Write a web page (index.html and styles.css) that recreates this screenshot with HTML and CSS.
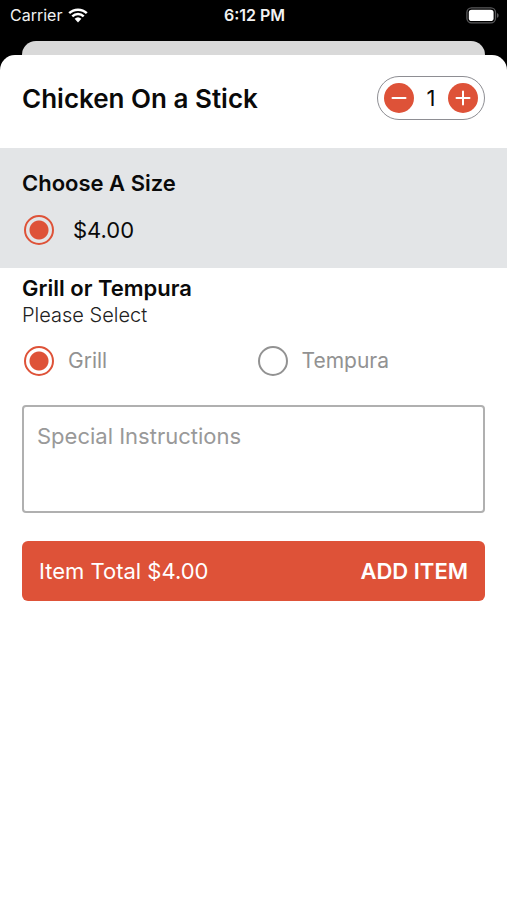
FILE: index.html
```html
<!DOCTYPE html>
<html lang="en">
<head>
<meta charset="utf-8">
<meta name="viewport" content="width=device-width, initial-scale=1">
<title>Chicken On a Stick</title>
<link rel="stylesheet" href="styles.css">
</head>
<body>
<div class="status">
  <div class="carrier">
    <span>Carrier</span>
    <svg class="wifi" viewBox="0 0 20 15" aria-hidden="true">
      <path d="M1.2 5.2a12.7 12.7 0 0 1 17.6 0M4.3 8.4a8.2 8.2 0 0 1 11.4 0" fill="none" stroke="currentColor" stroke-width="2.5"/>
      <path d="M6.6 10.8a5 5 0 0 1 6.8 0L10 14.4z" fill="currentColor"/>
    </svg>
  </div>
  <span class="time">6:12 PM</span>
  <svg class="battery" viewBox="0 0 33 17" aria-hidden="true">
    <rect x="0.9" y="0.9" width="28.6" height="15" rx="4.6" fill="none" stroke="#59595b" stroke-width="1.3"/>
    <rect x="2.8" y="2.8" width="24.8" height="11.2" rx="2.8" fill="#fff"/>
    <path d="M31 6v4.8c1-.4 1.6-1.3 1.6-2.4S32 6.400 31 6z" fill="#59595b"/>
  </svg>
</div>
<div class="back-card"></div>
<main class="sheet">
  <header class="header">
    <h1>Chicken On a Stick</h1>
    <div class="stepper">
      <button type="button" aria-label="Decrease quantity"><svg viewBox="0 0 30 30" aria-hidden="true"><path d="M8.500 15h13"/></svg></button>
      <output>1</output>
      <button type="button" aria-label="Increase quantity"><svg viewBox="0 0 30 30" aria-hidden="true"><path d="M8.500 15h13M15 8.500v13"/></svg></button>
    </div>
  </header>
  <section class="size">
    <h2>Choose A Size</h2>
    <label class="option price"><input type="radio" name="size" checked>$4.00</label>
  </section>
  <section class="style">
    <h2>Grill or Tempura</h2>
    <p>Please Select</p>
    <div class="choices">
      <label class="option"><input type="radio" name="style" checked>Grill</label>
      <label class="option"><input type="radio" name="style">Tempura</label>
    </div>
  </section>
  <div class="actions">
    <textarea placeholder="Special Instructions" aria-label="Special Instructions"></textarea>
    <button type="button" class="add"><span>Item Total $4.00</span><strong>ADD ITEM</strong></button>
  </div>
</main>
</body>
</html>
```
FILE: styles.css
```css
* {
  box-sizing: border-box;
}

body {
  margin: 0;
  min-height: 100vh;
  display: flex;
  flex-direction: column;
  background: #000;
  color: #0a0a0a;
  font-family: Inter, "Liberation Sans", sans-serif;
  font-size: 22px;
}

h1, h2, p {
  margin: 0;
}

button, textarea {
  font: inherit;
}

.status {
  display: grid;
  grid-template-columns: 1fr auto 1fr;
  align-items: center;
  height: 30px;
  padding: 0 8px 0 10px;
  color: #f2f2f2;
  font-size: 16px;
}

.carrier {
  display: flex;
  align-items: center;
  gap: 6px;
}

.wifi {
  width: 20px;
  height: 15px;
  color: #fff;
}

.time {
  font-weight: 600;
}

.battery {
  width: 33px;
  height: 17px;
  justify-self: end;
}

.back-card {
  height: 14px;
  margin: 11px 22px 0;
  border-radius: 14px 14px 0 0;
  background: #d9d9d9;
}

.sheet {
  flex: 1;
  border-radius: 15px 15px 0 0;
  background: #fff;
}

.header {
  display: flex;
  align-items: center;
  justify-content: space-between;
  padding: 21px 22px 28px;
}

h1 {
  font-size: 26px;
  font-weight: 600;
}

h2 {
  font-size: 22px;
  line-height: 28px;
  font-weight: 600;
}

.stepper {
  display: flex;
  align-items: center;
  justify-content: space-between;
  width: 108px;
  height: 44px;
  padding: 0 6px;
  border: 1px solid #8e8e93;
  border-radius: 22px;
}

.stepper button {
  width: 30px;
  height: 30px;
  padding: 0;
  border: 0;
  border-radius: 50%;
  background: #de5238;
}

.stepper svg {
  display: block;
  fill: none;
  stroke: #fff;
  stroke-width: 2;
  stroke-linecap: round;
}

.size {
  padding: 21px 22px;
  background: #e3e5e7;
}

.option {
  display: flex;
  align-items: center;
  gap: 14px;
  line-height: 30px;
}

.price {
  gap: 19px;
  padding: 18px 0 2px;
}

.option input {
  appearance: none;
  flex: none;
  width: 30px;
  height: 30px;
  margin: 0 0 0 2px;
  border: 2px solid #929292;
  border-radius: 50%;
}

.option input:checked {
  border-color: #de5238;
  background: radial-gradient(circle, #de5238 9px, transparent 10px);
}

.style {
  padding: 6px 22px 0;
}

.style p {
  color: #222;
  font-size: 20px;
  font-weight: 300;
  line-height: 26px;
}

.choices {
  display: grid;
  grid-template-columns: 1fr 1fr;
  gap: 4px;
  padding-top: 17px;
  color: #929292;
  font-size: 21px;
}

.choices .option {
  line-height: 32px;
}

.actions {
  display: flex;
  flex-direction: column;
  gap: 28px;
  padding: 28px 22px;
}

textarea {
  display: block;
  width: 100%;
  height: 108px;
  padding: 15px 13px;
  border: 2px solid #b0b0b0;
  border-radius: 4px;
  background: #fff;
  line-height: 28px;
  resize: none;
}

textarea::placeholder {
  color: #999;
  opacity: 1;
}

.add {
  display: flex;
  align-items: center;
  justify-content: space-between;
  height: 60px;
  padding: 0 17px;
  border: 0;
  border-radius: 6px;
  background: #de5238;
  color: #fff;
}

.add strong {
  font-weight: 600;
}
```
